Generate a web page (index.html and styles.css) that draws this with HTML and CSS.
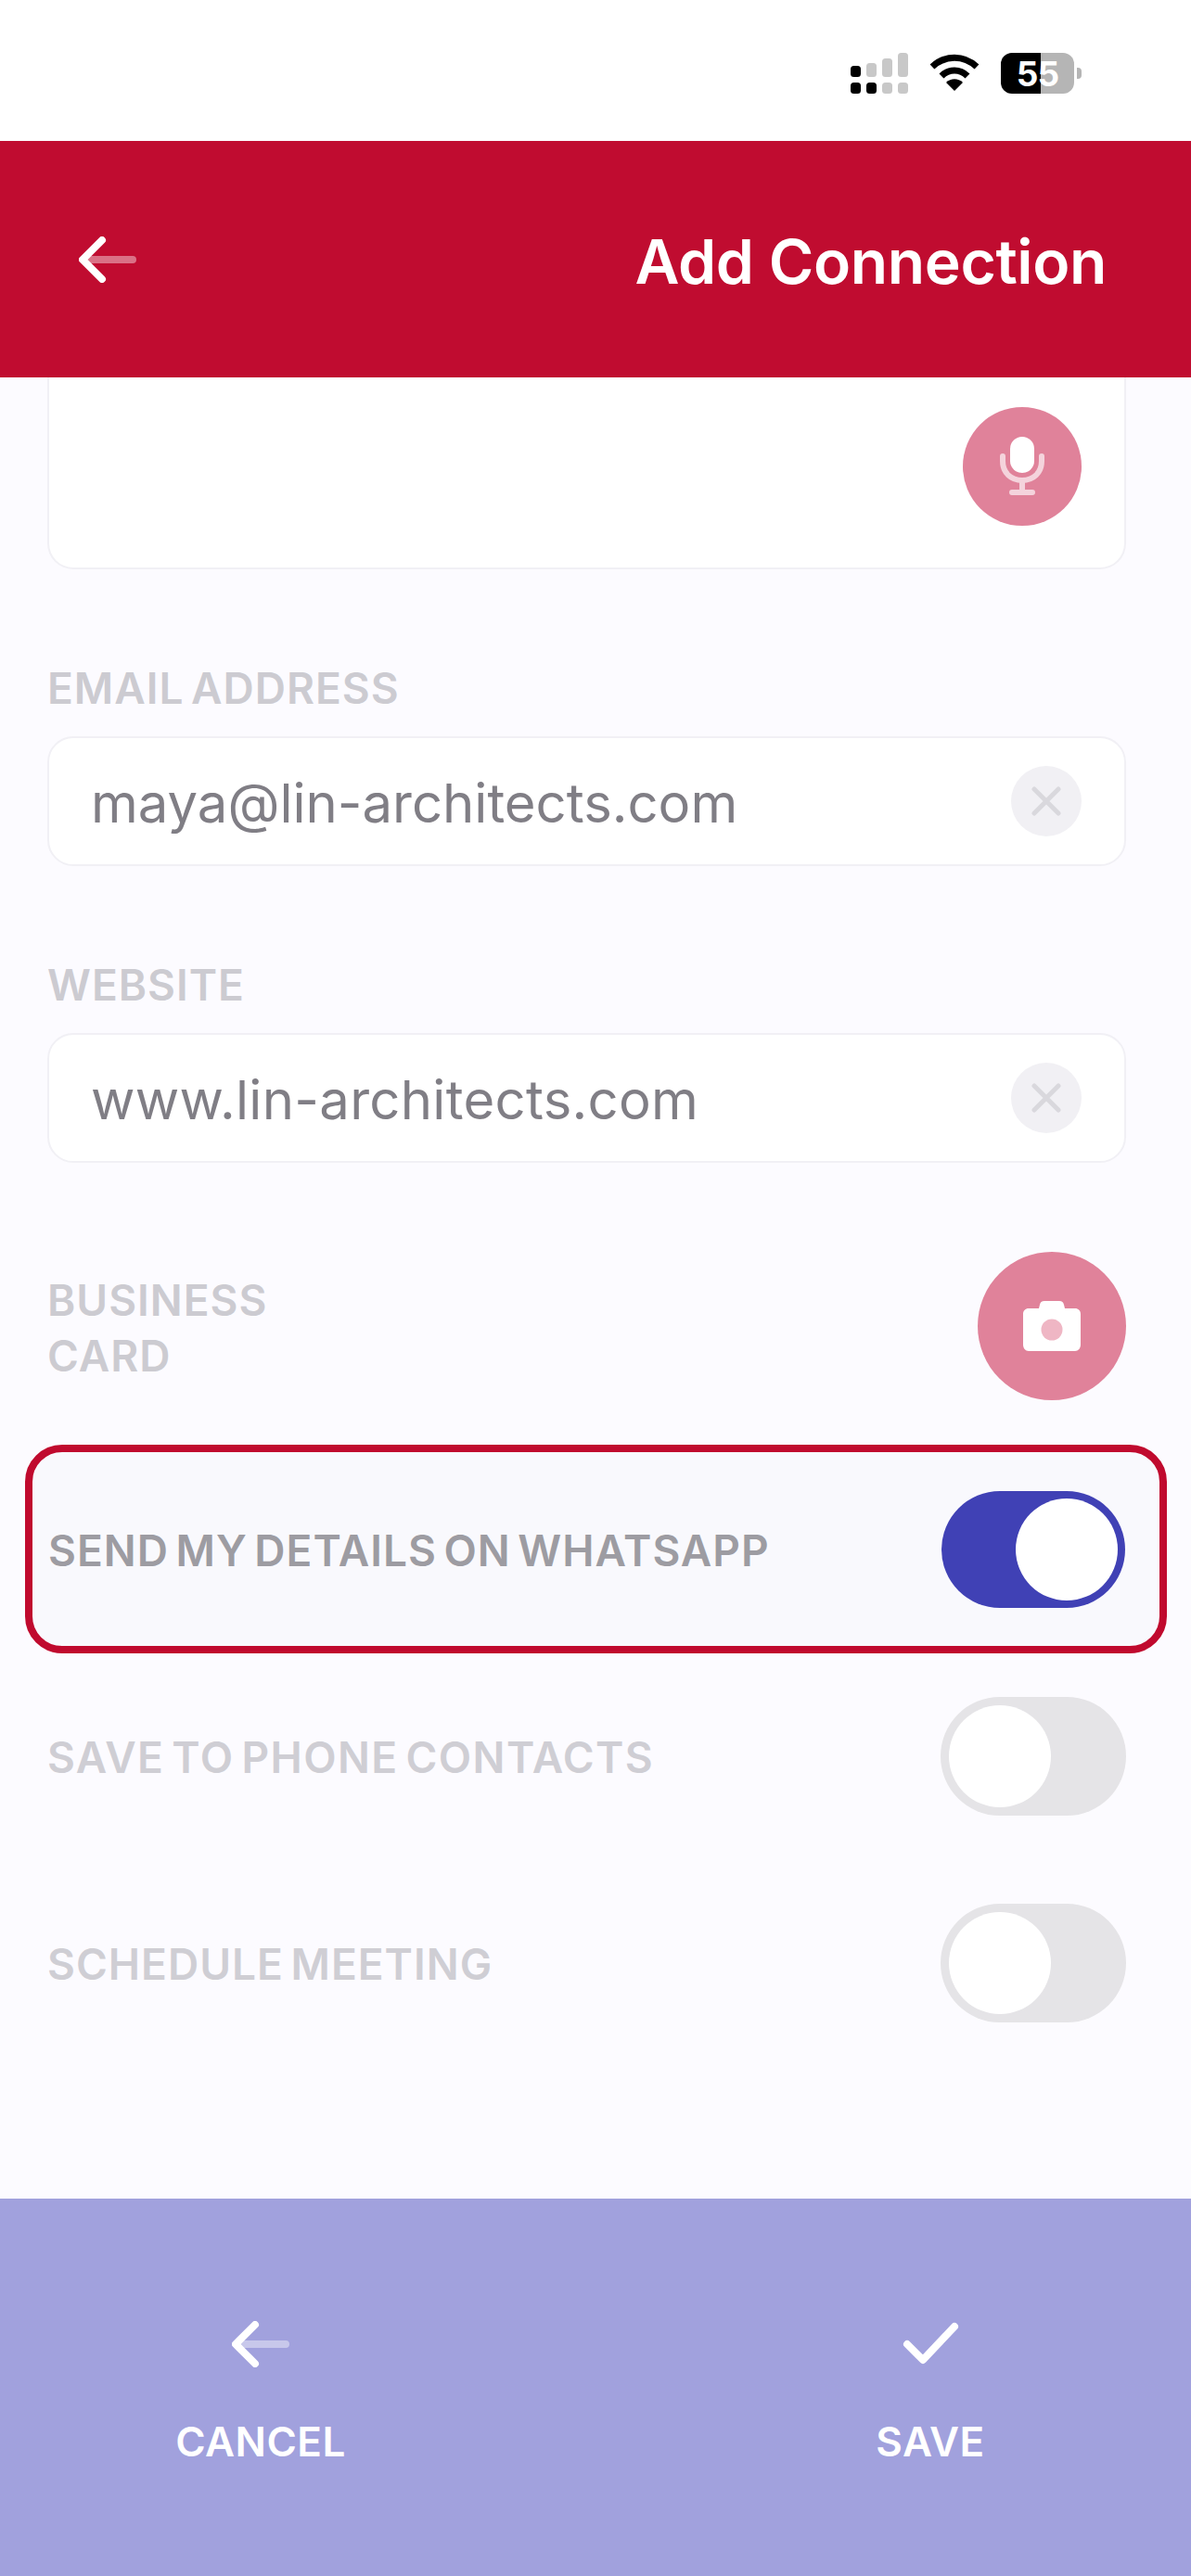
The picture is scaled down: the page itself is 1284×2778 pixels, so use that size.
FILE: index.html
```html
<!DOCTYPE html>
<html lang="en">
<head>
<meta charset="utf-8">
<title>Add Connection</title>
<link rel="stylesheet" href="styles.css">
</head>
<body>
<div class="app">
  <div class="status">
    <svg class="sig" width="62" height="44" viewBox="0 0 62 44">
      <rect x="0" y="14" width="11" height="12" rx="3.5" fill="#000"/>
      <rect x="0" y="32" width="11" height="12" rx="3.5" fill="#000"/>
      <rect x="17" y="32" width="11" height="12" rx="3.5" fill="#000"/>
      <rect x="17" y="11" width="11" height="15" rx="3.5" fill="#c8c8c8"/>
      <rect x="34" y="6" width="11" height="20" rx="3.5" fill="#c8c8c8"/>
      <rect x="34" y="32" width="11" height="12" rx="3.5" fill="#c8c8c8"/>
      <rect x="51" y="0" width="11" height="26" rx="3.5" fill="#c8c8c8"/>
      <rect x="51" y="32" width="11" height="12" rx="3.5" fill="#c8c8c8"/>
    </svg>
    <svg class="wifi" width="54" height="42" viewBox="0 0 54 42">
      <path d="M3 14 C17 1 37 1 51 14" fill="none" stroke="#000" stroke-width="7"/>
      <path d="M13 24 C21 16 33 16 41 24" fill="none" stroke="#000" stroke-width="7"/>
      <path d="M18 31 C23 26 31 26 36 31 L27 40 Z" fill="#000"/>
    </svg>
    <div class="batt">
      <div class="batt-body"><span class="batt-text">55</span></div>
      <div class="batt-tip"></div>
    </div>
  </div>

  <header class="head">
    <svg class="ico-back" width="62" height="50" viewBox="0 0 62 50">
      <path d="M8 25 H58" stroke="#fff" stroke-opacity=".42" stroke-width="8" stroke-linecap="round"/>
      <path d="M25 4 L4 25 L25 46" fill="none" stroke="#fff" stroke-width="8" stroke-linecap="round" stroke-linejoin="round"/>
    </svg>
    <h1 class="title">Add Connection</h1>
  </header>

  <main class="form">
    <div class="card notes">
      <div class="round mic">
        <svg width="48" height="64" viewBox="0 0 48 64">
          <rect x="11" y="0" width="26" height="39" rx="13" fill="#fff"/>
          <path d="M3 21 V26 C3 39 12 47 24 47 C36 47 45 39 45 26 V21 M24 47 V58 M13 60 H35" fill="none" stroke="#fff" stroke-opacity=".65" stroke-width="6" stroke-linecap="round"/>
        </svg>
      </div>
    </div>

    <label class="label lab-field">EMAIL ADDRESS</label>
    <div class="card input">
      <span class="val">maya@lin-architects.com</span>
      <span class="clear"><svg width="32" height="32" viewBox="0 0 32 32"><path d="M3 3 L29 29 M29 3 L3 29" stroke="#d9d8dd" stroke-width="5" stroke-linecap="round"/></svg></span>
    </div>

    <label class="label lab-field">WEBSITE</label>
    <div class="card input">
      <span class="val val-web">www.lin-architects.com</span>
      <span class="clear"><svg width="32" height="32" viewBox="0 0 32 32"><path d="M3 3 L29 29 M29 3 L3 29" stroke="#d9d8dd" stroke-width="5" stroke-linecap="round"/></svg></span>
    </div>

    <div class="biz">
      <div class="label biz-label">BUSINESS<br>CARD</div>
      <div class="round cam">
        <svg width="62" height="54" viewBox="0 0 62 54">
          <path d="M6 8 H17 L18 4 C18.600 1.500 20 0 23 0 H39 C42 0 43.400 1.500 44 4 L45 8 H56 C59.500 8 62 10.500 62 14 V47 C62 51 59.500 54 56 54 H6 C2.500 54 0 51 0 47 V14 C0 10.500 2.500 8 6 8 Z" fill="#fff"/>
          <circle cx="31" cy="31" r="11.500" fill="#efb6c4"/>
        </svg>
      </div>
    </div>

    <div class="row hi">
      <span class="row-label on">SEND MY DETAILS ON WHATSAPP</span>
      <span class="tog tog-on"><span class="knob"></span></span>
    </div>
    <div class="row plain first">
      <span class="row-label wide">SAVE TO PHONE CONTACTS</span>
      <span class="tog tog-off"><span class="knob"></span></span>
    </div>
    <div class="row plain second">
      <span class="row-label">SCHEDULE MEETING</span>
      <span class="tog tog-off"><span class="knob"></span></span>
    </div>
  </main>

  <footer class="foot">
    <div class="act">
      <svg width="62" height="50" viewBox="0 0 62 50">
        <path d="M8 25 H58" stroke="#fff" stroke-opacity=".42" stroke-width="8" stroke-linecap="round"/>
        <path d="M25 4 L4 25 L25 46" fill="none" stroke="#fff" stroke-width="8" stroke-linecap="round" stroke-linejoin="round"/>
      </svg>
      <span class="act-label">CANCEL</span>
    </div>
    <div class="act">
      <svg width="62" height="50" viewBox="0 0 62 50">
        <path d="M6 25 L23 42 L57 6" fill="none" stroke="#fff" stroke-width="8" stroke-linecap="round" stroke-linejoin="round"/>
      </svg>
      <span class="act-label">SAVE</span>
    </div>
  </footer>
</div>
</body>
</html>
```
FILE: styles.css
```css
* { box-sizing: border-box; }
html, body { margin: 0; padding: 0; }
body { width: 1284px; height: 2778px; overflow: hidden; background: #fcfbff; font-family: "Inter", "Liberation Sans", sans-serif; }
.app { width: 1284px; height: 2778px; display: flex; flex-direction: column; }

.status { height: 152px; flex: none; background: #fff; display: flex; align-items: flex-start; padding: 57px 0 0 917px; }
.sig { flex: none; }
.wifi { flex: none; margin: 1px 0 0 23px; }
.batt { display: flex; align-items: center; margin: 0 0 0 23px; height: 44px; }
.batt-body { width: 79px; height: 44px; border-radius: 12px; background: linear-gradient(90deg, #000 0 55%, #b5b5b5 55% 100%); display: flex; align-items: center; justify-content: center; }
.batt-text { color: #fff; font-size: 37px; font-weight: 700; line-height: 1; letter-spacing: -1px; }
.batt-tip { width: 5px; height: 12px; margin-left: 3px; border-radius: 0 4px 4px 0; background: #b5b5b5; }

.head { height: 255px; flex: none; background: #c00c30; display: flex; align-items: center; justify-content: space-between; padding: 0 91px 0 85px; position: relative; z-index: 1; }
.ico-back { flex: none; }
.title { margin: 4px 0 0; color: #fff; font-size: 66px; font-weight: 600; letter-spacing: -.4px; line-height: 1; }

.form { flex: 1; display: flex; flex-direction: column; padding: 0 70px 0 51px; }
.card { background: #fff; border: 2px solid #f1f0f5; border-radius: 28px; width: 1163px; }
.notes { height: 207px; flex: none; border-top: 0; border-radius: 0 0 28px 28px; padding: 32px 46px 0 0; display: flex; justify-content: flex-end; align-items: flex-start; }
.round { border-radius: 50%; background: #e0829a; display: flex; align-items: center; justify-content: center; flex: none; }
.mic { width: 128px; height: 128px; }
.label { display: block; color: #cccbd1; font-size: 46px; font-weight: 600; letter-spacing: 1px; word-spacing: -5px; line-height: 52px; }
.lab-field { margin-top: 102px; }
.input { height: 140px; flex: none; margin-top: 26px; display: flex; align-items: center; justify-content: space-between; padding: 0 46px 0 45px; }
.val { color: #807e85; font-size: 58px; font-weight: 400; letter-spacing: 0; line-height: 1; padding-top: 3px; }
.val-web { letter-spacing: .3px; }
.clear { width: 76px; height: 76px; border-radius: 50%; background: #f1f0f4; display: flex; align-items: center; justify-content: center; flex: none; }

.biz { width: 1163px; display: flex; align-items: center; justify-content: space-between; margin-top: 96px; }
.biz-label { line-height: 60px; padding-top: 3px; }
.cam { width: 160px; height: 160px; }

.row { width: 1163px; display: flex; align-items: center; justify-content: space-between; flex: none; }
.hi { margin: 48px 0 0 -24px; width: 1231px; height: 225px; padding: 0 37px 0 17px; border: 8px solid #c00a2e; border-radius: 40px; background: #f9f9fd; }
.plain { height: 128px; }
.first { margin-top: 47px; }
.second { margin-top: 95px; }
.row-label { color: #cfced4; font-size: 46px; font-weight: 600; letter-spacing: 1px; word-spacing: -5px; line-height: 52px; padding-top: 2px; }
.row-label.wide { letter-spacing: 1.400px; }
.row-label.on { color: #9d9ca2; }
.tog { display: flex; flex: none; }
.knob { width: 110px; height: 110px; border-radius: 50%; background: #fff; }
.tog-on { width: 198px; height: 126px; border-radius: 63px; padding: 8px; background: #4041b5; justify-content: flex-end; }
.tog-off { width: 200px; height: 128px; border-radius: 64px; padding: 9px; background: #e5e4e7; justify-content: flex-start; }

.foot { flex: none; height: 407px; background: #a1a1dd; display: flex; justify-content: space-between; padding-top: 132px; }
.act { width: 562px; display: flex; flex-direction: column; align-items: center; gap: 58px; }
.act-label { color: #fff; font-size: 44px; font-weight: 600; letter-spacing: .5px; line-height: 44px; }
```
